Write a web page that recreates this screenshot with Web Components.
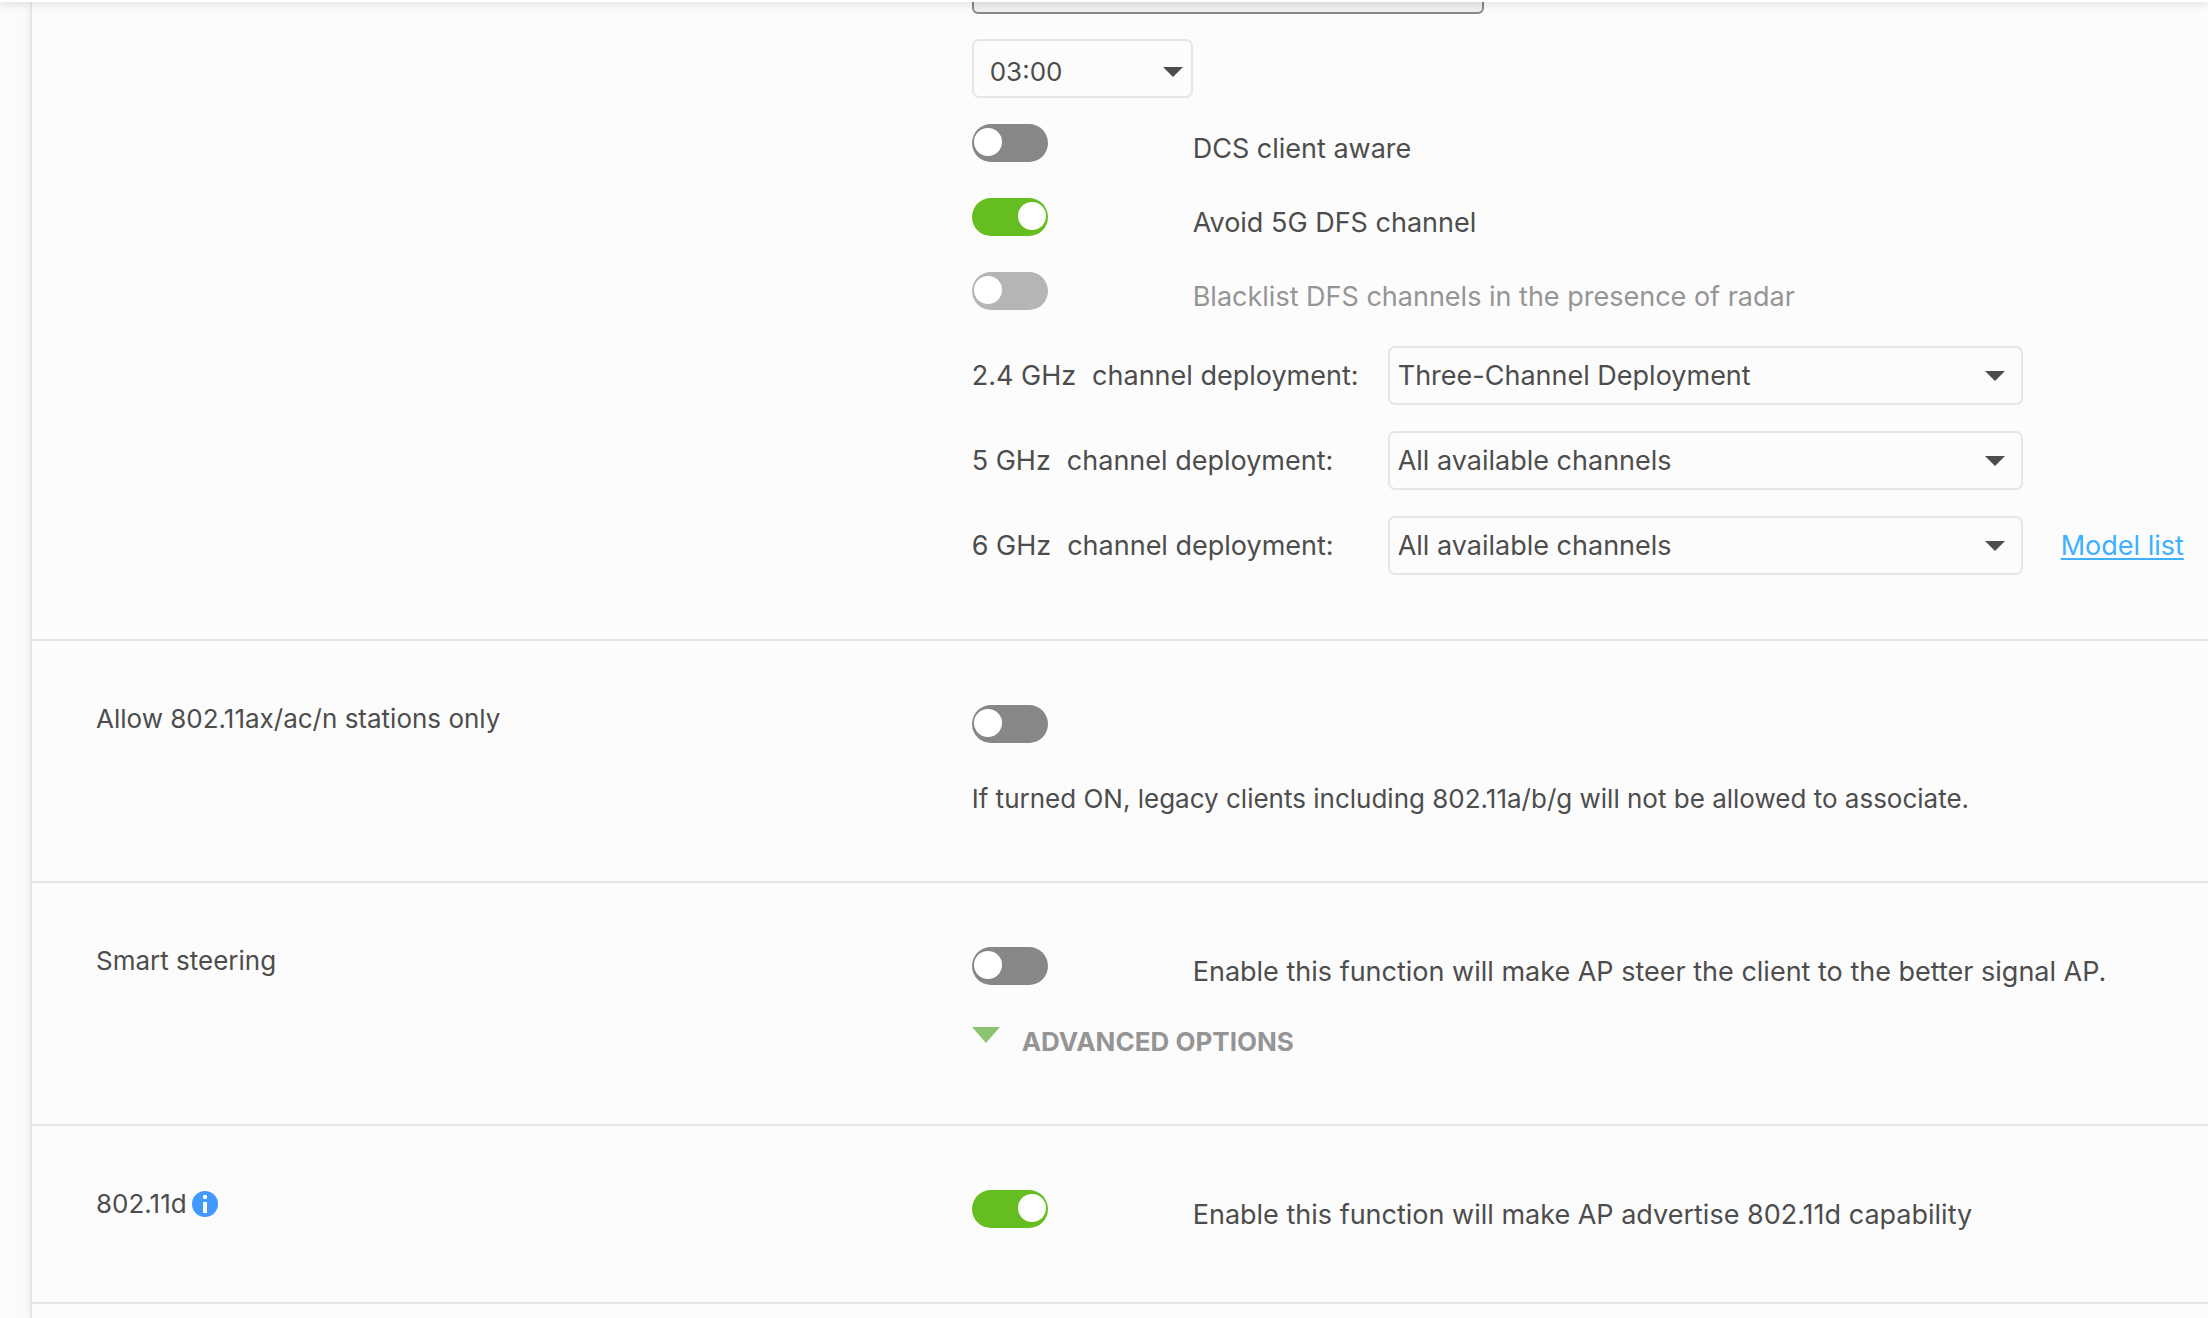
<!DOCTYPE html>
<html lang="en">
<head>
<meta charset="utf-8">
<title>Wireless settings</title>
<style>
  body { margin: 0; height: 100vh; overflow: hidden; background: #f9fcf8; font: 27px/34px Inter, "Liberation Sans", sans-serif; color: #4d4d4d; }
</style>
</head>
<body>
<settings-page>
  <setting-section flush>
    <text-box slot="content" label="Schedule"></text-box>
    <drop-down slot="content" size="time" label="Start time" value="03:00"></drop-down>
    <switch-list slot="content">
      <toggle-row>DCS client aware</toggle-row>
      <toggle-row on>Avoid 5G DFS channel</toggle-row>
      <toggle-row off-limits>Blacklist DFS channels in the presence of radar</toggle-row>
    </switch-list>
    <deployment-row slot="content" band="2.4 GHz" value="Three-Channel Deployment"></deployment-row>
    <deployment-row slot="content" band="5 GHz" value="All available channels"></deployment-row>
    <deployment-row slot="content" band="6 GHz" value="All available channels" link="Model list"></deployment-row>
  </setting-section>
  <setting-section>
    <span slot="name">Allow 802.11ax/ac/n stations only</span>
    <toggle-row slot="content" stacked>If turned ON, legacy clients including 802.11a/b/g will not be allowed to associate.</toggle-row>
  </setting-section>
  <setting-section>
    <span slot="name">Smart steering</span>
    <toggle-row slot="content">Enable this function will make AP steer the client to the better signal AP.</toggle-row>
    <advanced-button slot="content">ADVANCED OPTIONS</advanced-button>
  </setting-section>
  <setting-section>
    <span slot="name">802.11d</span>
    <info-icon slot="name"></info-icon>
    <toggle-row slot="content" on>Enable this function will make AP advertise 802.11d capability</toggle-row>
  </setting-section>
</settings-page>
<script>
const define = (name, render) => customElements.define(name, class extends HTMLElement {
  constructor() {
    super();
    this.attachShadow({ mode: 'open' });
  }
  connectedCallback() {
    this.shadowRoot.innerHTML = render(this);
  }
});

define('settings-page', () => `
  <style>
    :host { display: flex; flex-direction: column; height: 100%; }
    header { flex: none; height: 2px; background: #fff; box-shadow: 0 0 8px rgba(0,0,0,.4); position: relative; z-index: 1; }
    main { flex: 1; margin-left: 30px; border-left: 2px solid #e5e6e5; background: #fcfcfc; box-shadow: 0 0 10px rgba(0,0,0,.07); }
  </style>
  <header></header>
  <main><slot></slot></main>`);

define('setting-section', () => `
  <style>
    :host { display: grid; grid-template-columns: 17fr 24fr; padding-left: 64px; border-bottom: 2px solid #e6e6e6; }
    .name { display: flex; align-items: center; align-self: start; gap: 5px; padding-top: 61px; font-size: 26px; }
    .content { display: flex; flex-direction: column; align-items: flex-start; gap: 36px; min-width: 0; min-height: 47px; padding: 64px 0 65px; }
    /* The first section is scrolled partly under the header. */
    :host([flush]) .content { gap: 26px; padding: 0 0 64px; margin-top: -48px; }
  </style>
  <div class="name"><slot name="name"></slot></div>
  <div class="content"><slot name="content"></slot></div>`);

define('switch-list', () => `
  <style>:host { display: flex; flex-direction: column; gap: 32px; padding-bottom: 6px; }</style>
  <slot></slot>`);

define('text-box', el => `
  <style>
    :host { display: block; }
    input { display: block; box-sizing: border-box; width: 512px; height: 60px; border: 2px solid #878787; border-radius: 6px; background: #f0f0f0; font: inherit; color: inherit; margin-bottom: -1px; }
  </style>
  <input type="text" disabled aria-label="${el.getAttribute('label')}">`);

define('drop-down', el => `
  <style>
    :host { display: grid; width: 635px; }
    :host([size=time]) { width: 221px; font-size: 26px; }
    select, svg { grid-area: 1 / 1; }
    select { appearance: none; box-sizing: border-box; width: 100%; height: 59px; margin: 0; padding: 0 40px 0 8px; border: 2px solid #e6e6e6; border-radius: 7px; background: #fcfcfc; font: inherit; color: inherit; opacity: 1; }
    :host([size=time]) select { padding: 7px 32px 0 16px; }
    svg { align-self: center; justify-self: end; margin-right: 18px; width: 20px; height: 10px; fill: #4d4d4d; pointer-events: none; }
    :host([size=time]) svg { margin: 6px 10px 0 0; }
  </style>
  <select aria-label="${el.getAttribute('label')}"><option>${el.getAttribute('value')}</option></select>
  <svg viewBox="0 0 20 10" aria-hidden="true"><path d="M0 0H20L10 10Z"/></svg>`);

define('toggle-row', el => `
  <style>
    :host { display: grid; grid-template-columns: 221px auto; }
    :host([stacked]) { grid-template-columns: auto; row-gap: 39px; font-size: 26px; }
    input { appearance: none; display: flex; align-items: center; box-sizing: border-box; width: 76px; height: 38px; margin: 0; padding: 0 2px 2px; border-radius: 19px; background: #878787; }
    input::before { content: ""; width: 28px; height: 28px; border-radius: 50%; background: #fff; }
    input:checked { justify-content: flex-end; background: #65be1f; }
    input:disabled { background: #b5b5b5; }
    label { padding-top: 8px; white-space: nowrap; }
    :host([stacked]) label { padding-top: 0; }
    input:disabled + label { color: #959595; }
  </style>
  <input type="checkbox" role="switch" id="box" ${el.hasAttribute('on') ? 'checked' : ''} ${el.hasAttribute('off-limits') ? 'disabled' : ''}>
  <label for="box"><slot></slot></label>`);

define('deployment-row', el => `
  <style>
    :host { display: flex; align-items: center; }
    .text { display: flex; gap: 16px; width: 416px; white-space: nowrap; }
    a { margin-left: 38px; color: #3fb0ff; text-decoration-thickness: 2px; text-underline-offset: 3px; white-space: nowrap; }
  </style>
  <div class="text"><span>${el.getAttribute('band')}</span><span>channel deployment:</span></div>
  <drop-down label="${el.getAttribute('band')} channel deployment" value="${el.getAttribute('value')}"></drop-down>
  ${el.hasAttribute('link') ? `<a href="#models">${el.getAttribute('link')}</a>` : ''}`);

define('advanced-button', () => `
  <style>
    :host { display: block; }
    button { display: flex; align-items: flex-start; gap: 22px; padding: 0; border: 0; background: none; font: inherit; font-size: 26px; font-weight: 700; color: #959595; }
    svg { margin-top: 2px; width: 28px; height: 16px; fill: #8bc470; }
  </style>
  <button type="button"><svg viewBox="0 0 28 16" aria-hidden="true"><path d="M0 0H28L14 16Z"/></svg><slot></slot></button>`);

define('info-icon', () => `
  <style>:host { display: block; } svg { display: block; width: 26px; height: 26px; }</style>
  <svg viewBox="0 0 26 26" role="img" aria-label="Info"><circle cx="13" cy="13" r="13" fill="#4198ff"/><circle cx="13" cy="6" r="2.2" fill="#fff"/><path d="M11 11H15V22H11Z" fill="#fff"/></svg>`);
</script>
</body>
</html>
